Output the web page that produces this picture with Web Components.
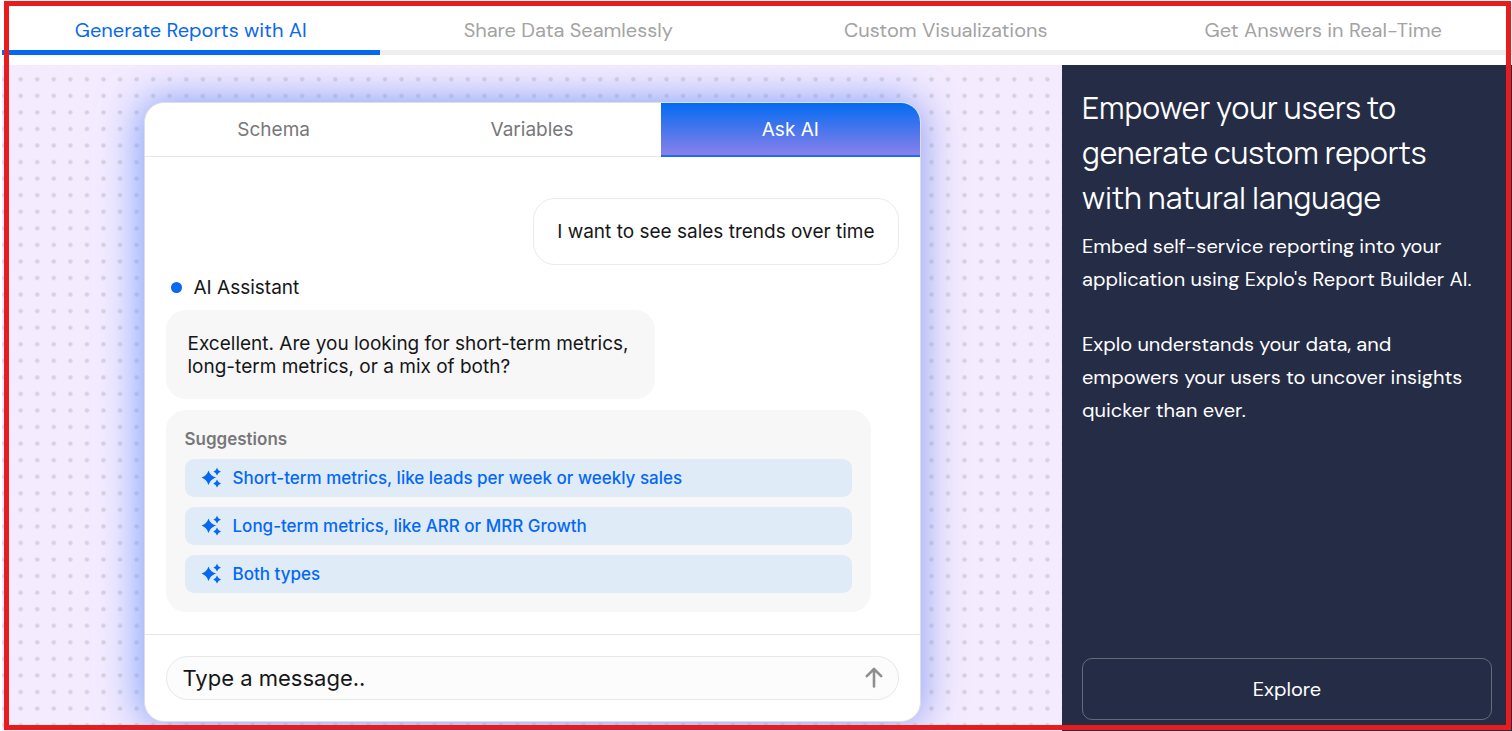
<!DOCTYPE html>
<html lang="en">
<head>
<meta charset="utf-8">
<title>Explo features</title>
<style>
  html, body { margin: 0; background: #fff; }
  body { font-family: "DM Sans", "Noto Sans", sans-serif; }
</style>
</head>
<body>
<feature-showcase>
  <feature-tabs slot="tabs"></feature-tabs>
  <dot-stage slot="stage">
    <ai-card>
      <user-message>I want to see sales trends over time</user-message>
      <assistant-message>Excellent. Are you looking for short-term metrics, long-term metrics, or a mix of both?</assistant-message>
      <suggestion-list>
        <suggestion-item>Short-term metrics, like leads per week or weekly sales</suggestion-item>
        <suggestion-item>Long-term metrics, like ARR or MRR Growth</suggestion-item>
        <suggestion-item>Both types</suggestion-item>
      </suggestion-list>
    </ai-card>
  </dot-stage>
  <feature-panel slot="panel">
    <span slot="title">Empower your users to generate custom reports with natural language</span>
    <p>Embed self-service reporting into your application using Explo's Report Builder AI.</p>
    <p>Explo understands your data, and empowers your users to uncover insights quicker than ever.</p>
  </feature-panel>
</feature-showcase>
<script>
const define = (name, html) => {
  const template = document.createElement('template');
  template.innerHTML = '<style>*{box-sizing:border-box}</style>' + html;
  customElements.define(name, class extends HTMLElement {
    constructor() {
      super();
      this.attachShadow({ mode: 'open' }).append(template.content.cloneNode(true));
    }
  });
};

define('feature-showcase', `
<style>
  :host { display: flex; flex-direction: column; position: relative; min-height: 100vh; padding-left: 2px; box-sizing: border-box; overflow: hidden; }
  .body { flex: 1; display: grid; grid-template-columns: minmax(0, 1060fr) minmax(0, 450fr); margin-top: 10px; }
  .frame { position: absolute; inset: 1px 1px 1px 4px; border: 5px solid #e81c1c; pointer-events: none; }
</style>
<slot name="tabs"></slot>
<div class="body"><slot name="stage"></slot><slot name="panel"></slot></div>
<div class="frame"></div>`);

define('feature-tabs', `
<style>
  :host { display: block; }
  nav { display: grid; grid-template-columns: repeat(4, 1fr); }
  button { height: 55px; padding: 9px 0 0; border: 0; border-bottom: 5px solid #eee; background: none; color: #a3a3a3; font: 400 20px/24px "DM Sans", "Noto Sans", sans-serif; }
  button[aria-selected="true"] { color: #0a68ed; border-color: #0468f4; }
</style>
<nav role="tablist">
  <button role="tab" aria-selected="true">Generate Reports with AI</button>
  <button role="tab" aria-selected="false">Share Data Seamlessly</button>
  <button role="tab" aria-selected="false">Custom Visualizations</button>
  <button role="tab" aria-selected="false">Get Answers in Real-Time</button>
</nav>`);

define('dot-stage', `
<style>
  :host { display: flex; justify-content: center; position: relative; background: #f4ebff; padding: 37px 0 9px; overflow: hidden; }
  .dots { position: absolute; inset: 0; width: 100%; height: 100%; }
  ::slotted(*) { position: relative; }
</style>
<svg class="dots" aria-hidden="true">
  <pattern id="dots" x="10.4" y="6" width="16.56" height="16.56" patternUnits="userSpaceOnUse"><circle cx="8.28" cy="8.28" r="2.2" fill="#d3d3da"/></pattern>
  <rect width="100%" height="100%" fill="url(#dots)"/>
</svg>
<slot></slot>`);

define('ai-card', `
<style>
  :host { display: flex; flex-direction: column; width: 75%; max-width: 777px; background: #fff; border: 1px solid #dedfe6; border-radius: 20px; font-family: Inter, sans-serif; box-sizing: border-box;
    box-shadow: -6px 0 40px #5c96ff99, 6px 0 36px #a098e880; }
  .tabs { display: grid; grid-template-columns: repeat(3, 1fr); border-radius: 19px 19px 0 0; overflow: hidden; }
  .tabs button { height: 54px; border: 0; border-bottom: 1px solid #e6e6e6; background: none; color: #77777a; font: 400 19px/24px Inter, sans-serif; padding: 0; }
  .tabs button[aria-selected="true"] { color: #fff; background: linear-gradient(#026bf1, #8a80e9); border-bottom: 2px solid #1a6cf0; padding-top: 1px; }
  .chat { flex: 1; display: flex; flex-direction: column; padding: 41px 21px 22px; }
  .compose { border-top: 1px solid #e6e6e6; padding: 21px; }
  .field { display: flex; align-items: center; height: 44px; border: 1px solid #e8e8e8; border-radius: 22px; background: #fcfcfc; padding: 0 10px 0 16px; }
  input { flex: 1; min-width: 0; border: 0; outline: 0; padding: 0; background: none; color: #161618; font: 400 22px/28px Inter, sans-serif; }
  .send { display: flex; padding: 0; border: 0; background: none; }
</style>
<div class="tabs" role="tablist">
  <button role="tab" aria-selected="false">Schema</button>
  <button role="tab" aria-selected="false">Variables</button>
  <button role="tab" aria-selected="true">Ask AI</button>
</div>
<div class="chat"><slot></slot></div>
<div class="compose"><div class="field">
  <input aria-label="Message" value="Type a message..">
  <button class="send" aria-label="Send"><svg width="28" height="28" viewBox="0 0 28 28" fill="none" stroke="#918e91" stroke-width="2.600" stroke-linecap="round" stroke-linejoin="round"><path d="M14 22.500V5M6.800 12.200L14 5l7.200 7.200"/></svg></button>
</div></div>`);

define('user-message', `
<style>
  :host { display: block; align-self: flex-end; border: 1px solid #ebebeb; border-radius: 22px; padding: 21px 23px 20px; color: #161618; font-size: 19px; line-height: 24px; }
</style><slot></slot>`);

define('assistant-message', `
<style>
  :host { display: block; margin-top: 11px; color: #161618; font-size: 19px; line-height: 23px; }
  .who { display: flex; align-items: center; gap: 12px; padding-left: 5px; }
  .who::before { content: ""; width: 11px; height: 11px; border-radius: 50%; background: #0468f4; }
  .bubble { width: 489px; max-width: 100%; margin-top: 11px; padding: 22px 22px 21px; border-radius: 20px; background: #f7f7f8; }
</style>
<div class="who">AI Assistant</div><div class="bubble"><slot></slot></div>`);

define('suggestion-list', `
<style>
  :host { display: flex; flex-direction: column; gap: 10px; width: 705px; max-width: 100%; box-sizing: border-box; margin-top: 11px; padding: 19px; border-radius: 20px; background: #f7f7f8; }
  .label { color: #77777a; font-size: 17px; line-height: 20px; font-weight: 600; }
</style>
<div class="label">Suggestions</div><slot></slot>`);

define('suggestion-item', `
<style>
  :host { display: block; }
  button { display: flex; align-items: center; gap: 10px; width: 100%; height: 38px; padding: 0 16px; border: 0; border-radius: 9px; background: #e0ebf8; color: #0468f4; font: 500 17px/20px Inter, sans-serif; }
</style>
<button><svg width="22" height="22" viewBox="0 0 22 22" fill="#0468f4" aria-hidden="true"><path d="M7.500 3.500Q9.300 9.200 15 10.500Q9.300 12.300 7.500 18Q5.700 12.300 0.500 10.500Q5.700 9.200 7.500 3.500zM16 0.500Q17 4 20 4.500Q17 5.500 16 8.500Q15 5.500 12.300 4.500Q15 4 16 0.500zM16 12.500Q17 15.700 20 16.500Q17 17.300 16 20.500Q15 17.300 12.300 16.500Q15 15.700 16 12.500z"/></svg><span><slot></slot></span></button>`);

define('feature-panel', `
<style>
  :host { display: flex; flex-direction: column; padding: 20px 20px 11px; background: #252c46; color: #fff; box-sizing: border-box; }
  h2 { margin: 0; font: 400 30px/45px Manrope, "DM Sans", Inter, sans-serif; }
  .text { margin-top: 10px; font: 400 20px/33px "DM Sans", "Noto Sans", sans-serif; display: flex; flex-direction: column; gap: 32px; }
  ::slotted(p) { margin: 0; }
  a { display: flex; align-items: center; justify-content: center; height: 62px; margin-top: auto; border: 1px solid #666a78; border-radius: 10px; color: #fff; text-decoration: none; font: 400 20px/24px "DM Sans", "Noto Sans", sans-serif; }
</style>
<h2><slot name="title"></slot></h2>
<div class="text"><slot></slot></div>
<a href="#explore">Explore</a>`);
</script>
</body>
</html>
